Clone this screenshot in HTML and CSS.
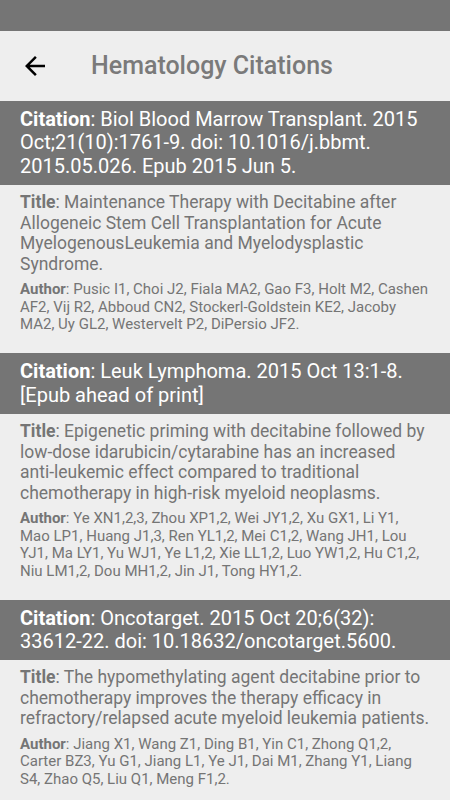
FILE: index.html
```html
<!DOCTYPE html>
<html>
<head>
<meta charset="utf-8">
<link rel="stylesheet" href="styles.css">
</head>
<body>
<div class="status-bar"></div>
<header class="toolbar">
  <span class="back" aria-label="Back">
    <svg width="30" height="30" viewBox="0 0 24 24"><path d="M20 11H7.83l5.59-5.59L12 4l-8 8 8 8 1.41-1.41L7.83 13H20v-2z" fill="#000"/></svg>
  </span>
  <h1 class="toolbar-title">Hematology Citations</h1>
</header>
<main class="list">
  <section class="card">
    <div class="citation"><b>Citation</b>: Biol Blood Marrow Transplant. 2015 Oct;21(10):1761-9. doi: 10.1016/j.bbmt.<wbr>2015.05.026. Epub 2015 Jun 5.</div>
    <div class="body">
      <p class="title"><b>Title</b>: Maintenance Therapy with Decitabine after Allogeneic Stem Cell Transplantation for Acute MyelogenousLeukemia and Myelodysplastic Syndrome.</p>
      <p class="author"><b>Author</b>: Pusic I1, Choi J2, Fiala MA2, Gao F3, Holt M2, Cashen AF2, Vij R2, Abboud CN2, Stockerl-Goldstein KE2, Jacoby MA2, Uy GL2, Westervelt P2, DiPersio JF2.</p>
    </div>
  </section>
  <section class="card">
    <div class="citation"><b>Citation</b>: Leuk Lymphoma. 2015 Oct 13:1-8. [Epub ahead of print]</div>
    <div class="body">
      <p class="title"><b>Title</b>: Epigenetic priming with decitabine followed by low-dose idarubicin/cytarabine has an increased anti-leukemic effect compared to traditional chemotherapy in high-risk myeloid neoplasms.</p>
      <p class="author"><b>Author</b>: Ye XN1,2,3, Zhou XP1,2, Wei JY1,2, Xu GX1, Li Y1, Mao LP1, Huang J1,3, Ren YL1,2, Mei C1,2, Wang JH1, Lou YJ1, Ma LY1, Yu WJ1, Ye L1,2, Xie LL1,2, Luo YW1,2, Hu C1,2, Niu LM1,2, Dou MH1,2, Jin J1, Tong HY1,2.</p>
    </div>
  </section>
  <section class="card">
    <div class="citation"><b>Citation</b>: Oncotarget. 2015 Oct 20;6(32):<wbr>33612-22. doi: 10.18632/oncotarget.5600.</div>
    <div class="body">
      <p class="title"><b>Title</b>: The hypomethylating agent decitabine prior to chemotherapy improves the therapy efficacy in refractory/relapsed acute myeloid leukemia patients.</p>
      <p class="author"><b>Author</b>: Jiang X1, Wang Z1, Ding B1, Yin C1, Zhong Q1,2, Carter BZ3, Yu G1, Jiang L1, Ye J1, Dai M1, Zhang Y1, Liang S4, Zhao Q5, Liu Q1, Meng F1,2.</p>
    </div>
  </section>
</main>
</body>
</html>
```
FILE: styles.css
```css
html, body {
  margin: 0;
  padding: 0;
}
body {
  background: #eeeeee;
  font-family: Roboto, "Noto Sans", sans-serif;
  width: 450px;
  height: 800px;
  overflow: hidden;
}
.status-bar {
  height: 31px;
  background: #757575;
}
.toolbar {
  height: 70px;
  display: flex;
  align-items: center;
  background: #eeeeee;
}
.back {
  width: 30px;
  height: 30px;
  margin-left: 20px;
  display: flex;
}
.toolbar-title {
  margin: 0 0 0 41px;
  font-size: 25px;
  font-weight: 500;
  color: #7a7a7a;
  line-height: 30px;
}
.list {
  display: flex;
  flex-direction: column;
  gap: 19.5px;
}
.citation {
  background: #757575;
  color: #ffffff;
  font-size: 20px;
  line-height: 23.4px;
  padding: 7px 18px 7px 20px;
}
.citation b, .body b {
  font-weight: 700;
}
.body {
  padding: 7px 18px 0 20px;
  color: #757575;
}
.title {
  margin: 0 0 7px;
  font-size: 17.5px;
  line-height: 20.5px;
}
.author {
  margin: 0;
  font-size: 15px;
  line-height: 17.5px;
}
```
